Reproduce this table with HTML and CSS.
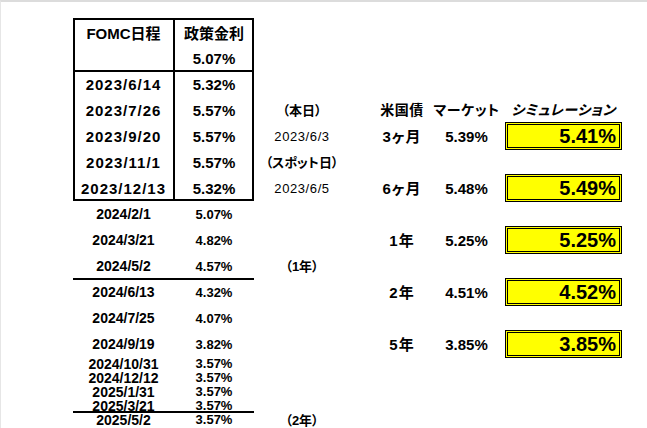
FILE: index.html
```html
<!DOCTYPE html>
<html lang="ja">
<head>
<meta charset="utf-8">
<title>FOMC</title>
<link rel="stylesheet" href="styles.css">
</head>
<body>
<div class="sheet">
  <div class="frame"></div>
  <div class="frame-head"></div>
  <div class="frame-div"></div>
  <div class="rule r10"></div>
  <div class="rule r17"></div>

  <div class="c a r1 hd">FOMC日程</div>
  <div class="c b r1 hd">政策金利</div>
  <div class="c b r2 pb">5.07%</div>

  <div class="c a r3 db">2023/6/14</div><div class="c b r3 pb">5.32%</div>
  <div class="c a r4 db">2023/7/26</div><div class="c b r4 pb">5.57%</div>
  <div class="c a r5 db">2023/9/20</div><div class="c b r5 pb">5.57%</div>
  <div class="c a r6 db">2023/11/1</div><div class="c b r6 pb">5.57%</div>
  <div class="c a r7 db">2023/12/13</div><div class="c b r7 pb">5.32%</div>

  <div class="c a r8 ds">2024/2/1</div><div class="c b r8 ps">5.07%</div>
  <div class="c a r9 ds">2024/3/21</div><div class="c b r9 ps">4.82%</div>
  <div class="c a r10 ds">2024/5/2</div><div class="c b r10 ps">4.57%</div>
  <div class="c a r11 ds">2024/6/13</div><div class="c b r11 ps">4.32%</div>
  <div class="c a r12 ds">2024/7/25</div><div class="c b r12 ps">4.07%</div>
  <div class="c a r13 ds">2024/9/19</div><div class="c b r13 ps">3.82%</div>
  <div class="c a r14 ds sm">2024/10/31</div><div class="c b r14 ps sm">3.57%</div>
  <div class="c a r15 ds sm">2024/12/12</div><div class="c b r15 ps sm">3.57%</div>
  <div class="c a r16 ds sm">2025/1/31</div><div class="c b r16 ps sm">3.57%</div>
  <div class="c a r17 ds sm">2025/3/21</div><div class="c b r17 ps sm">3.57%</div>
  <div class="c a r18 ds sm">2025/5/2</div><div class="c b r18 ps sm">3.57%</div>

  <div class="c cc r4 lb">（本日）</div>
  <div class="c d r4 jh">米国債</div>
  <div class="c e r4 jh">マーケット</div>
  <div class="c f r4 jh sim">シミュレーション</div>

  <div class="c cc r5 dr">2023/6/3</div>
  <div class="c d r5 tn">3ヶ月</div>
  <div class="c e r5 pm">5.39%</div>
  <div class="c f fb r5"><div class="ybox">5.41%</div></div>

  <div class="c cc r6 lb">（スポット日）</div>

  <div class="c cc r7 dr">2023/6/5</div>
  <div class="c d r7 tn">6ヶ月</div>
  <div class="c e r7 pm">5.48%</div>
  <div class="c f fb r7"><div class="ybox">5.49%</div></div>

  <div class="c d r9 tn">1年</div>
  <div class="c e r9 pm">5.25%</div>
  <div class="c f fb r9"><div class="ybox">5.25%</div></div>

  <div class="c cc r10 lb">（1年）</div>

  <div class="c d r11 tn">2年</div>
  <div class="c e r11 pm">4.51%</div>
  <div class="c f fb r11"><div class="ybox">4.52%</div></div>

  <div class="c d r13 tn">5年</div>
  <div class="c e r13 pm">3.85%</div>
  <div class="c f fb r13"><div class="ybox">3.85%</div></div>

  <div class="c cc r18 lb">（2年）</div>
</div>
</body>
</html>
```
FILE: styles.css
```css
html, body {
  margin: 0;
  padding: 0;
  background: #fff;
}
body {
  width: 647px;
  height: 428px;
  overflow: hidden;
  box-sizing: border-box;
  border-top: 2px solid #dcdcdc;
  border-left: 1px solid #e6e6e6;
  font-family: "Liberation Sans", "Noto Sans CJK JP", sans-serif;
  color: #000;
}
.sheet {
  display: grid;
  grid-template-columns: 72px 101px 80px 96px 86px 69px 117px 1fr;
  grid-template-rows: 16px 27px 26px 26px 26px 26px 26px 26px 26px 26px 26px 26px 26px 26px 14px 14px 14px 14px 14px;
}
.c {
  display: flex;
  align-items: center;
  justify-content: center;
  white-space: nowrap;
  line-height: 1;
}
.a { grid-column: 2; }
.b { grid-column: 3; }
.cc { grid-column: 4; }
.d { grid-column: 5; padding-left: 18px; }
.e { grid-column: 6; padding-right: 8px; }
.f { grid-column: 7; }

.r1 { grid-row: 2; }
.r2 { grid-row: 3; }
.r3 { grid-row: 4; }
.r4 { grid-row: 5; }
.r5 { grid-row: 6; }
.r6 { grid-row: 7; }
.r7 { grid-row: 8; }
.r8 { grid-row: 9; }
.r9 { grid-row: 10; }
.r10 { grid-row: 11; }
.r11 { grid-row: 12; }
.r12 { grid-row: 13; }
.r13 { grid-row: 14; }
.r14 { grid-row: 15; }
.r15 { grid-row: 16; }
.r16 { grid-row: 17; }
.r17 { grid-row: 18; }
.r18 { grid-row: 19; }

.frame {
  grid-column: 2 / 4;
  grid-row: 2 / 9;
  border: 2px solid #000;
}
.frame-head {
  grid-column: 2 / 4;
  grid-row: 2 / 4;
  border-bottom: 2px solid #000;
  margin-bottom: -1px;
}
.frame-div {
  grid-column: 3;
  grid-row: 2 / 9;
  border-left: 2px solid #000;
  margin-left: -1px;
}
.rule {
  grid-column: 2 / 4;
  border-bottom: 2px solid #000;
}
.rule.r10 { grid-row: 11; margin-bottom: -1px; }
.rule.r17 { grid-row: 18; margin-bottom: 0; }

.hd {
  font-size: 15px;
  font-weight: bold;
  padding-top: 3px;
}
.db {
  font-size: 15px;
  font-weight: bold;
  letter-spacing: 1px;
}
.pb {
  font-size: 15px;
  font-weight: bold;
}
.ds {
  font-size: 14px;
  font-weight: bold;
}
.ps {
  font-size: 13px;
  font-weight: bold;
}
.sm {
  overflow: visible;
  height: 14px;
  line-height: 14px;
}
.lb {
  font-size: 13px;
  font-weight: bold;
  font-feature-settings: "palt";
}
.jh {
  font-size: 14px;
  font-weight: bold;
  font-feature-settings: "palt";
  letter-spacing: 0.5px;
}
.sim {
  font-style: italic;
  font-weight: bold;
  letter-spacing: 0.5px;
}
.dr {
  font-size: 13px;
  letter-spacing: 0.6px;
}
.tn {
  font-size: 15px;
  font-weight: bold;
  font-feature-settings: "palt";
  letter-spacing: 1px;
}
.pm {
  font-size: 15px;
  font-weight: bold;
}
.fb {
  align-items: stretch;
}
.ybox {
  flex: 1;
  margin: -1px 0;
  box-sizing: border-box;
  background: #ffff00;
  border: 3px double #000;
  display: flex;
  align-items: center;
  justify-content: flex-end;
  padding-right: 3px;
  font-size: 20px;
  font-weight: bold;
}
```
